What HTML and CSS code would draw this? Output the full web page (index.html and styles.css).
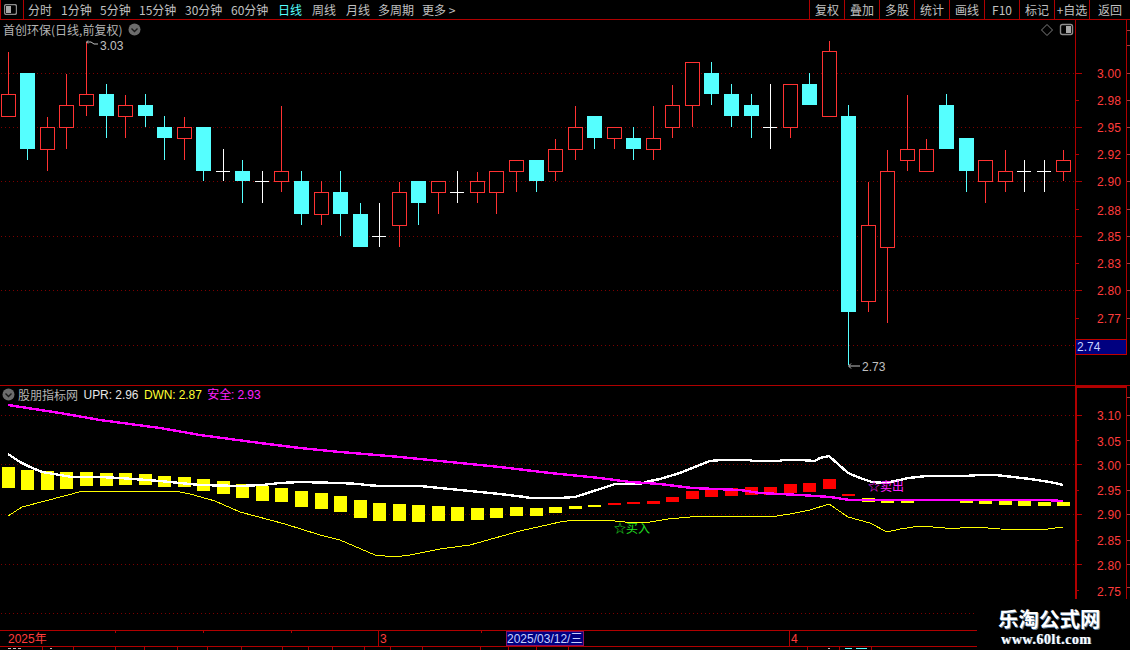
FILE: index.html
```html
<!DOCTYPE html>
<html lang="zh-CN">
<head>
<meta charset="utf-8">
<title>首创环保 日线</title>
<link rel="stylesheet" href="styles.css">
</head>
<body>
<div class="app">
  <header class="toolbar">
    <div class="side-toggle">
      <svg class="pane-icon" width="13" height="11" viewBox="0 0 13 11"><rect x="0.5" y="0.5" width="12" height="10" rx="2" class="icon-frame"/><rect x="2" y="2" width="5" height="7" class="icon-fill"/></svg>
    </div>
    <nav class="periods">
      <span class="period">分时</span>
      <span class="period">1分钟</span>
      <span class="period">5分钟</span>
      <span class="period">15分钟</span>
      <span class="period">30分钟</span>
      <span class="period">60分钟</span>
      <span class="period is-active">日线</span>
      <span class="period">周线</span>
      <span class="period">月线</span>
      <span class="period">多周期</span>
      <span class="period">更多 &gt;</span>
    </nav>
    <div class="actions">
      <span class="action">复权</span>
      <span class="action">叠加</span>
      <span class="action">多股</span>
      <span class="action">统计</span>
      <span class="action">画线</span>
      <span class="action">F10</span>
      <span class="action">标记</span>
      <span class="action action-wide">+自选</span>
      <span class="action action-last">返回</span>
    </div>
  </header>

  <section class="pane pane-price">
    <div class="pane-title">
      <span class="title-name">首创环保(日线,前复权)</span>
      <svg class="chevron" width="13" height="13" viewBox="0 0 13 13"><circle cx="6.5" cy="6.5" r="6" class="chevron-disc"/><path d="M3.5 5.5 6.5 8.5 9.5 5.5" class="chevron-mark"/></svg>
    </div>
    <svg class="plot" id="price-plot" width="1130" height="365" viewBox="0 20 1130 365">
      <g class="grid">
        <path d="M1 73.5H1075M1 127.5H1075M1 181.5H1075M1 236.5H1075M1 290.5H1075M1 345.5H1075"/>
      </g>
      <g id="candles"></g>
      <path class="axis-line" d="M1075.5 20V385M1126.5 20V339"/>
      <path class="axis-line" d="M1075 73.5H1082M1075 100.5H1079M1075 127.5H1082M1075 154.5H1079M1075 181.5H1082M1075 209.5H1079M1075 236.5H1082M1075 263.5H1079M1075 290.5H1082M1075 318.5H1079"/>
      <path class="edge-tick" d="M1127 30.5H1130M1127 45.5H1130M1127 73.5H1130M1127 100.5H1130M1127 127.5H1130M1127 154.5H1130M1127 181.5H1130M1127 209.5H1130M1127 236.5H1130M1127 263.5H1130M1127 290.5H1130M1127 318.5H1130"/>
      <g class="axis-labels">
        <text x="1097" y="78">3.00</text><text x="1097" y="105">2.98</text><text x="1097" y="132">2.95</text><text x="1097" y="159">2.92</text><text x="1097" y="186">2.90</text><text x="1097" y="215">2.88</text><text x="1097" y="241">2.85</text><text x="1097" y="268">2.83</text><text x="1097" y="295">2.80</text><text x="1097" y="323">2.77</text>
      </g>
      <rect class="price-tag" x="1075.5" y="339.5" width="51" height="15"/>
      <text class="price-tag-text" x="1077" y="351">2.74</text>
      <path class="flag" d="M88 40.5 86.5 42 88 43.5M87 42H91L94 44 98 44"/>
      <text class="flag-text" x="100" y="50">3.03</text>
      <path class="flag" d="M851 363.5 848.5 366 851 368.5M849 366H860"/>
      <text class="flag-text" x="862" y="371">2.73</text>
      <path class="diamond" d="M1047 24.5 1052.5 30 1047 35.5 1041.5 30Z"/>
      <rect class="icon-frame" x="1060.5" y="24.5" width="12" height="10" rx="2"/>
      <rect class="icon-fill" x="1066" y="26" width="5" height="7"/>
    </svg>
  </section>

  <section class="pane pane-indicator">
    <div class="pane-title pane-title-low">
      <svg class="chevron" width="13" height="13" viewBox="0 0 13 13"><circle cx="6.5" cy="6.5" r="6" class="chevron-disc"/><path d="M3.5 5.5 6.5 8.5 9.5 5.5" class="chevron-mark"/></svg>
      <span class="title-name">股朋指标网</span>
      <span class="val-white">UPR: 2.96</span>
      <span class="val-yellow">DWN: 2.87</span>
      <span class="val-magenta">安全: 2.93</span>
    </div>
    <svg class="plot" id="indicator-plot" width="1130" height="244" viewBox="0 386 1130 244">
      <g class="grid">
        <path d="M1 415.5H1075M1 464.5H1075M1 514.5H1075M1 564.5H1075M1 613.5H1075"/>
      </g>
      <g id="bars"></g>
      <polyline id="line-dwn" class="line-dwn" points=""/>
      <polyline id="line-upr" class="line-upr" points=""/>
      <polyline id="line-safe" class="line-safe" points=""/>
      <text class="signal signal-buy" x="614" y="533">☆买入</text>
      <text class="signal signal-sell" x="868" y="491">☆卖出</text>
      <path class="axis-thick" d="M1076 386V599M1076 387H1126"/>
      <path class="axis-line" d="M1126.5 386V599"/>
      <path class="axis-line" d="M1077 415.5H1082M1077 440.5H1079M1077 464.5H1082M1077 490.5H1079M1077 514.5H1082M1077 540.5H1079M1077 564.5H1082M1077 590.5H1079"/>
      <path class="edge-tick" d="M1127 397.5H1130M1127 415.5H1130M1127 440.5H1130M1127 464.5H1130M1127 490.5H1130M1127 514.5H1130M1127 540.5H1130M1127 564.5H1130M1127 587.5H1130"/>
      <g class="axis-labels">
        <text x="1097" y="420">3.10</text><text x="1097" y="446">3.05</text><text x="1097" y="470">3.00</text><text x="1097" y="495">2.95</text><text x="1097" y="519">2.90</text><text x="1097" y="545">2.85</text><text x="1097" y="570">2.80</text><text x="1097" y="596">2.75</text>
      </g>
    </svg>
  </section>

  <footer class="date-bar">
    <svg class="plot" width="977" height="17" viewBox="0 630 977 17">
      <path class="axis-line" d="M0 630.5H977M0 646.5H977M378.5 631V646M789.5 631V646M115.5 631V633M203.5 631V633M291.5 631V633M481.5 631V633"/>
      <text class="date-text" x="8" y="643">2025年</text>
      <text class="date-text" x="380" y="643">3</text>
      <text class="date-text" x="791" y="643">4</text>
      <rect class="date-cursor" x="506.5" y="631.5" width="77" height="14"/>
      <text class="date-cursor-text" x="507" y="643">2025/03/12/三</text>
    </svg>
  </footer>

  <svg class="tab-strip" width="977" height="3" viewBox="0 647 977 3">
    <path class="axis-line" d="M42.5 647V650M73.5 647V650M115.5 647V650M144.5 647V650M177.5 647V650M207.5 647V650M241.5 647V650M282.5 647V650M308.5 647V650M332.5 647V650M364.5 647V650M390.5 647V650M422.5 647V650M480.5 647V650M508.5 647V650M536.5 647V650M568.5 647V650M807.5 647V650M839.5 647V650M871.5 647V650"/>
    <path class="tab-mark" d="M8 648.5H11M13 648.5H16M18 648.5H21M50 648.5H52M828 648.5H830"/>
    <path class="tab-mark-active" d="M845 648.5H852M856 648.5H867"/>
  </svg>

  <aside class="watermark">
    <div class="wm-name">乐淘公式网</div>
    <div class="wm-url">www.60lt.com</div>
  </aside>
</div>
<script src="chart.js"></script>
</body>
</html>
```

FILE: styles.css
```css
* { box-sizing: border-box; }
html, body { margin: 0; padding: 0; background: #000; }
body { width: 1130px; height: 650px; overflow: hidden; }

.app {
  position: relative;
  display: flex;
  flex-direction: column;
  width: 1130px;
  height: 650px;
  background: #000;
  color: #c0c0c0;
  font: 12px/1 "Noto Sans CJK SC", "Liberation Sans", sans-serif;
  overflow: hidden;
}

/* toolbar */
.toolbar {
  display: flex;
  flex: none;
  height: 20px;
  border-bottom: 1px solid #b00000;
}
.side-toggle {
  display: flex;
  align-items: center;
  justify-content: flex-end;
  width: 24px;
  padding: 0 6px 0 0;
  border-left: 1px solid #b00000;
  border-right: 1px solid #b00000;
}
.pane-icon { display: block; }
.icon-frame { fill: none; stroke: #8c8c8c; stroke-width: 1.4; }
.icon-fill { fill: #a8a8a8; }
.periods {
  display: grid;
  grid-template-columns: 33px 39px 39px 46px 46px 47px 34px 34px 32px 44px auto;
  align-items: center;
  padding-left: 4px;
  flex: 1;
}
.period { white-space: nowrap; color: #c0c0c0; }
.period.is-active { color: #55ffff; }
.actions { display: flex; }
.action {
  display: flex;
  align-items: center;
  justify-content: center;
  width: 35px;
  border-left: 1px solid #b00000;
  color: #c0c0c0;
  white-space: nowrap;
}
.action-last { width: 41px; }

/* panes */
.pane { position: relative; flex: none; }
.pane-price { height: 366px; border-bottom: 1px solid #b00000; }
.pane-indicator { height: 244px; }
.plot { display: block; }
.plot text { font-family: "Liberation Sans", "Noto Sans CJK SC", sans-serif; font-size: 12px; }

.pane-title {
  position: absolute;
  top: 3px;
  left: 3px;
  display: flex;
  align-items: center;
  gap: 5.5px;
  height: 13px;
  white-space: nowrap;
}
.pane-title-low { top: 2px; left: 2px; }
.title-name { color: #b4b4b4; }
.pane-title-low .title-name { margin-left: -2.5px; }
.val-white { color: #e6e6e6; font-family: "Liberation Sans", "Noto Sans CJK SC", sans-serif; letter-spacing: -0.05px; }
.val-yellow { color: #ffff33; font-family: "Liberation Sans", "Noto Sans CJK SC", sans-serif; letter-spacing: -0.1px; }
.val-magenta { color: #ff22ff; font-family: "Liberation Sans", "Noto Sans CJK SC", sans-serif; letter-spacing: -0.1px; }
.chevron { display: block; flex: none; }
.chevron-disc { fill: #6c6c6c; }
.chevron-mark { fill: none; stroke: #1a1a1a; stroke-width: 1.4; }

/* chart marks */
.grid path { fill: none; stroke: #7c0000; stroke-width: 1; stroke-dasharray: 1 3; shape-rendering: crispEdges; }
.axis-line { fill: none; stroke: #b00000; stroke-width: 1; shape-rendering: crispEdges; }
.axis-thick { fill: none; stroke: #b00000; stroke-width: 2; shape-rendering: crispEdges; }
.edge-tick { fill: none; stroke: #a04040; stroke-width: 1; shape-rendering: crispEdges; }
.axis-labels text { fill: #ff3c3c; letter-spacing: 0.2px; }
.price-tag { fill: #000080; stroke: #c00000; stroke-width: 1; shape-rendering: crispEdges; }
.plot .price-tag-text { fill: #c8d0ff; }
.flag { fill: none; stroke: #c0c0c0; stroke-width: 1; }
.plot .flag-text { fill: #c0c0c0; }
.diamond { fill: none; stroke: #808080; stroke-width: 1; }

.wick { stroke-width: 1; fill: none; shape-rendering: crispEdges; }
.wick-up { stroke: #ff3232; }
.wick-down { stroke: #55ffff; }
.wick-flat { stroke: #ffffff; }
.body-up { fill: #000; stroke: #ff3232; stroke-width: 1; shape-rendering: crispEdges; }
.body-down { fill: #55ffff; shape-rendering: crispEdges; }
.bar-yellow { fill: #ffff00; shape-rendering: crispEdges; }
.bar-red { fill: #ff0000; shape-rendering: crispEdges; }
.line-upr, .line-safe, .line-dwn { fill: none; shape-rendering: crispEdges; }
.line-upr { stroke: #ffffff; stroke-width: 2.4; }
.line-safe { stroke: #ff00ff; stroke-width: 2.4; }
.line-dwn { stroke: #ffff00; stroke-width: 1; }
.plot .signal { font-family: "Noto Sans CJK SC", sans-serif; }
.plot .signal-buy { fill: #22e022; }
.plot .signal-sell { fill: #ff20ff; }

/* date axis */
.date-bar { flex: none; height: 17px; }
.plot .date-text { fill: #ff3c3c; }
.date-cursor { fill: #000080; stroke: #8a1060; stroke-width: 1; shape-rendering: crispEdges; }
.plot .date-cursor-text { fill: #c8d0ff; }

.tab-strip { display: block; flex: none; }
.tab-mark { fill: none; stroke: #c0c0c0; stroke-width: 1; shape-rendering: crispEdges; }
.tab-mark-active { fill: none; stroke: #55ffff; stroke-width: 1; shape-rendering: crispEdges; }

/* watermark */
.watermark {
  position: absolute;
  right: 0;
  bottom: 0;
  width: 153px;
  height: 50px;
  background: #000;
  padding: 7px 0 0 21px;
  color: #fff;
  font-family: "Liberation Serif", "Noto Sans CJK SC", serif;
  font-weight: 700;
}
.wm-name {
  font-family: "Noto Sans CJK SC", sans-serif;
  font-size: 20.5px;
  line-height: 22px;
  text-shadow: 1px 1px 0 #5a7a9a;
  white-space: nowrap;
}
.wm-url {
  margin: 4px 0 0 3px;
  font-size: 14px;
  line-height: 14px;
  letter-spacing: 0.55px;
  text-shadow: 1px 0 0 #5a7a9a;
  white-space: nowrap;
}
```

FILE: chart.js
```js
// [left, top, bodyTop, bodyBottom, low, kind]  kind: u = up (hollow red), d = down (cyan), f = flat cross
var CANDLES = [
  [1,52,94,117,117,'u'],[20,73,73,149,160,'d'],[40,117,127,150,171,'u'],[59,74,105,128,149,'u'],
  [79,42,94,106,116,'u'],[99,84,94,116,138,'d'],[118,95,105,117,138,'u'],[138,94,105,116,127,'d'],
  [157,116,127,138,160,'d'],[177,117,127,139,160,'u'],[196,127,127,171,181,'d'],[216,149,171,171,181,'f'],
  [235,160,171,181,203,'d'],[255,171,181,181,203,'f'],[274,106,171,182,192,'u'],[294,171,181,214,225,'d'],
  [314,181,192,215,225,'u'],[333,171,192,214,236,'d'],[353,203,214,247,247,'d'],[372,203,236,236,247,'f'],
  [392,182,192,226,247,'u'],[411,181,181,203,225,'d'],[431,181,181,193,214,'u'],[450,171,192,192,203,'f'],
  [470,172,181,193,203,'u'],[489,171,171,193,214,'u'],[509,160,160,172,192,'u'],[529,160,160,181,192,'d'],
  [548,139,149,172,181,'u'],[568,106,127,150,160,'u'],[587,116,116,138,149,'d'],[607,127,127,139,149,'u'],
  [626,127,138,149,160,'d'],[646,106,138,150,160,'u'],[665,85,105,128,138,'u'],[685,62,62,106,127,'u'],
  [704,62,73,94,105,'d'],[724,84,94,116,127,'d'],[744,94,105,116,138,'d'],[763,84,127,127,149,'f'],
  [783,84,84,128,138,'u'],[802,73,84,105,105,'d'],[822,41,51,117,117,'u'],[841,105,116,312,365,'d'],
  [861,182,225,302,312,'u'],[880,150,171,248,323,'u'],[900,95,149,161,171,'u'],[919,139,149,172,172,'u'],
  [939,94,105,149,149,'d'],[959,138,138,171,192,'d'],[978,160,160,182,203,'u'],[998,150,171,182,192,'u'],
  [1017,160,171,171,192,'f'],[1037,160,171,171,192,'f'],[1056,150,160,172,181,'u']
];

// [left, top, bottom]
var BARS = [
  [2,467,488],[21,470,490],[41,471,490],[60,472,489],[80,472,486],[100,473,486],[119,473,485],[139,474,485],
  [158,476,487],[178,477,487],[197,479,491],[217,481,494],[236,484,498],[256,486,501],[275,488,502],[295,491,507],
  [315,493,509],[334,496,512],[354,500,518],[373,503,521],[393,504,521],[412,505,522],[432,506,521],[451,507,521],
  [471,508,520],[490,508,518],[510,507,516],[530,508,516],[549,507,513],[569,506,509],[588,505,507],
  [608,503,505,1],[627,502,504,1],[647,501,504,1],[666,497,502,1],[686,491,499,1],[705,489,497,1],[725,488,496,1],
  [745,487,495,1],[764,487,495,1],[784,484,493,1],[803,483,492,1],[823,479,489,1],[842,494,496,1],
  [862,498,502],[881,500,503],[901,499,503],[920,499,501],[940,499,501],[960,499,503],[979,501,504],[999,501,505],
  [1018,501,506],[1038,502,506],[1057,502,506]
];

var UPR = "8,454 20,462 30,467 42,472 60,475 72,477 100,477 120,478 160,481 180,483 200,485 240,486 262,485 280,483 300,482 340,483 360,484 365,485 380,486 420,486 430,487 450,489 480,492 500,494 525,497 530,498 560,498 575,497 600,489 615,484 640,484 650,481 660,479 680,473 700,465 710,461 722,460 750,460 752,461 780,461 782,460 800,460 815,461 820,458 829,456 848,473 860,478 872,482 885,483 900,480 908,478 927,476 965,476 980,475 995,475 1005,476 1030,479 1050,482 1063,485";
var SAFE = "8,405 60,413 100,420 160,428 200,435 260,443 300,448 340,452 400,457 450,462 500,467 550,473 600,478 630,482 660,484 692,488 740,490 760,493 800,495 830,497 850,500 880,500 1045,500 1063,501";
var DWN = "8,516 22,507 45,501 83,491 175,491 190,494 215,501 240,512 285,524 320,535 340,540 375,555 395,557 410,555 440,549 470,545 520,531 560,522 575,520 605,520 625,522 650,522 668,519 690,517 720,516 745,516 770,517 790,514 810,510 829,504 848,517 870,523 887,532 900,529 920,526 945,528 960,528 975,527 1000,529 1040,530 1063,527";

var NS = 'http://www.w3.org/2000/svg';
function el(name, cls, attrs) {
  var node = document.createElementNS(NS, name);
  node.setAttribute('class', cls);
  for (var k in attrs) node.setAttribute(k, attrs[k]);
  return node;
}

var candleLayer = document.getElementById('candles');
CANDLES.forEach(function (c) {
  var left = c[0], top = c[1], bt = c[2], bb = c[3], low = c[4], kind = c[5];
  if (kind === 'f') {
    var cx = left + 7.5;
    candleLayer.appendChild(el('path', 'wick wick-flat', { d: 'M' + cx + ' ' + top + 'V' + low + 'M' + left + ' ' + (bt + 0.5) + 'H' + (left + 14) }));
    return;
  }
  var mid = left + 7.5;
  var cls = kind === 'u' ? 'wick wick-up' : 'wick wick-down';
  var d = '';
  if (top < bt) d += 'M' + mid + ' ' + top + 'V' + bt;
  if (low > bb) d += 'M' + mid + ' ' + bb + 'V' + low;
  if (d) candleLayer.appendChild(el('path', cls, { d: d }));
  if (kind === 'u') {
    candleLayer.appendChild(el('rect', 'body-up', { x: left + 0.5, y: bt + 0.5, width: 14, height: bb - bt - 1 }));
  } else {
    candleLayer.appendChild(el('rect', 'body-down', { x: left, y: bt, width: 15, height: bb - bt }));
  }
});

var barLayer = document.getElementById('bars');
BARS.forEach(function (b) {
  barLayer.appendChild(el('rect', b[3] ? 'bar-red' : 'bar-yellow', { x: b[0], y: b[1], width: 13, height: b[2] - b[1] }));
});

document.getElementById('line-upr').setAttribute('points', UPR);
document.getElementById('line-safe').setAttribute('points', SAFE);
document.getElementById('line-dwn').setAttribute('points', DWN);
```
